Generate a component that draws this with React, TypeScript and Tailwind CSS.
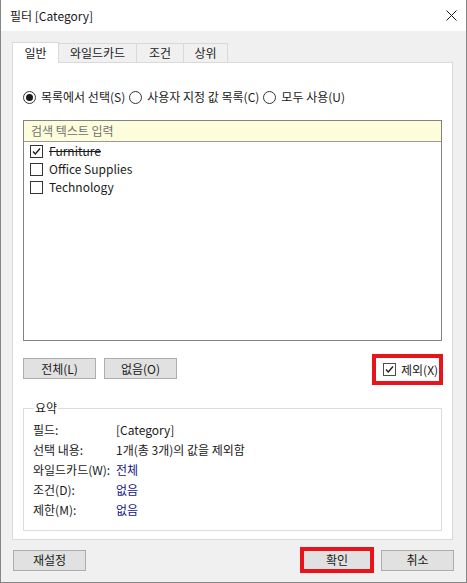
import React from "react";

const F = { fontFamily: '"Noto Sans CJK KR", "Noto Sans", sans-serif' };

function Check({ className = "" }: { className?: string }) {
  return (
    <svg width="11" height="11" viewBox="0 0 11 11" className={className}>
      <path d="M2 5.5 L4.3 8 L9 2.5" fill="none" stroke="#1a1a1a" strokeWidth="1.3" />
    </svg>
  );
}

function Box({ checked, gray }: { checked?: boolean; gray?: boolean }) {
  return (
    <div
      className={`w-[13px] h-[13px] border bg-white flex items-center justify-center shrink-0 ${
        gray ? "border-[#4d4d4d]" : "border-[#333333]"
      }`}
    >
      {checked && <Check />}
    </div>
  );
}

function Radio({ on }: { on?: boolean }) {
  return (
    <div className="w-[13px] h-[13px] rounded-full border border-[#333333] bg-white flex items-center justify-center shrink-0">
      {on && <div className="w-[7px] h-[7px] rounded-full bg-[#1a1a1a]" />}
    </div>
  );
}

function Btn({ children, w = "w-[73px]" }: { children: React.ReactNode; w?: string }) {
  return (
    <div
      className={`${w} h-[21px] bg-[#e1e1e1] border border-[#adadad] flex items-center justify-center text-[12px] text-[#1a1a1a]`}
    >
      {children}
    </div>
  );
}

export default function App() {
  return (
    <div
      style={F}
      className="w-[467px] h-[583px] flex flex-col border-x border-b border-[#868686] bg-[#f0f0f0] text-[12px] text-[#1a1a1a] leading-none overflow-hidden"
    >
      {/* Title bar */}
      <div className="h-[31px] bg-white flex items-center justify-between pl-[9px] pr-[9px] shrink-0">
        <span className="text-[12px]">필터 [Category]</span>
        <svg width="11" height="11" viewBox="0 0 11 11">
          <path d="M0.5 0.5 L10.5 10.5 M10.5 0.5 L0.5 10.5" stroke="#1a1a1a" strokeWidth="1" />
        </svg>
      </div>

      {/* Body */}
      <div className="flex-1 flex flex-col pl-[11px] pr-[13px] pt-[11px]">
        {/* Tabs */}
        <div className="flex items-end h-[20px] relative z-10">
          <div className="w-[47px] h-[21px] -mb-px bg-white border-x border-t border-[#d9d9d9] flex items-center justify-center">
            일반
          </div>
          <div className="w-[78px] h-[19px] bg-[#f0f0f0] border-t border-r border-[#d9d9d9] flex items-center justify-center">
            와일드카드
          </div>
          <div className="w-[47px] h-[19px] bg-[#f0f0f0] border-t border-r border-[#d9d9d9] flex items-center justify-center">
            조건
          </div>
          <div className="w-[44px] h-[19px] bg-[#f0f0f0] border-t border-r border-[#d9d9d9] flex items-center justify-center">
            상위
          </div>
        </div>

        {/* Panel */}
        <div className="w-[441px] h-[478px] bg-white border border-[#d9d9d9] flex flex-col px-[10px] shrink-0">
          {/* Radio row */}
          <div className="flex items-center h-[16px] mt-[26px]">
            <Radio on />
            <span className="ml-[5px]">목록에서 선택(S)</span>
            <div className="ml-[4px]">
              <Radio />
            </div>
            <span className="ml-[5px]">사용자 지정 값 목록(C)</span>
            <div className="ml-[4px]">
              <Radio />
            </div>
            <span className="ml-[5px]">모두 사용(U)</span>
          </div>

          {/* List */}
          <div className="mt-[15px] h-[221px] border border-[#828282] flex flex-col shrink-0">
            <div className="h-[21px] bg-[#fdfddc] border-b border-[#9a9a9a] flex items-center pl-[7px] text-[#707070] shrink-0">
              검색 텍스트 입력
            </div>
            <div className="flex flex-col pl-[6px]">
              <div className="h-[18px] flex items-center">
                <Box checked />
                <span className="ml-[6px] line-through">Furniture</span>
              </div>
              <div className="h-[18px] flex items-center">
                <Box />
                <span className="ml-[6px]">Office Supplies</span>
              </div>
              <div className="h-[18px] flex items-center">
                <Box />
                <span className="ml-[6px]">Technology</span>
              </div>
            </div>
          </div>

          {/* Buttons row */}
          <div className="mt-[13px] h-[31px] flex items-start">
            <div className="mt-[4px] flex gap-[8px]">
              <Btn>전체(L)</Btn>
              <Btn>없음(O)</Btn>
            </div>
            <div className="ml-auto -mr-[1px] w-[71px] h-[31px] border-[4px] border-[#e8141c] flex items-center pl-[7px]">
              <Box checked gray />
              <span className="ml-[5px]">제외(X)</span>
            </div>
          </div>

          {/* Summary */}
          <fieldset className="mt-[17px] h-[129px] border border-[#dcdcdc] px-[9px] pt-[6px]">
            <legend className="ml-[1px] px-[1px]">요약</legend>
            <div className="flex flex-col">
              {[
                ["필드:", "[Category]", false],
                ["선택 내용:", "1개(총 3개)의 값을 제외함", false],
                ["와일드카드(W):", "전체", true],
                ["조건(D):", "없음", true],
                ["제한(M):", "없음", true],
              ].map(([k, v, blue]) => (
                <div key={k as string} className="h-[20px] flex items-center">
                  <span className="w-[83px] shrink-0">{k}</span>
                  <span className={blue ? "text-[#14148a]" : ""}>{v}</span>
                </div>
              ))}
            </div>
          </fieldset>
        </div>

        {/* Bottom buttons */}
        <div className="mt-[7px] h-[26px] flex items-center">
          <div className="ml-[1px]">
            <Btn w="w-[73px]">재설정</Btn>
          </div>
          <div className="ml-auto w-[74px] h-[26px] border-[4px] border-[#e8141c] flex items-center justify-center">
            <div className="w-[66px] h-[18px] bg-[#e1e1e1] flex items-center justify-center">확인</div>
          </div>
          <div className="ml-[7px] -mr-[1px]">
            <Btn w="w-[73px]">취소</Btn>
          </div>
        </div>
      </div>
    </div>
  );
}
